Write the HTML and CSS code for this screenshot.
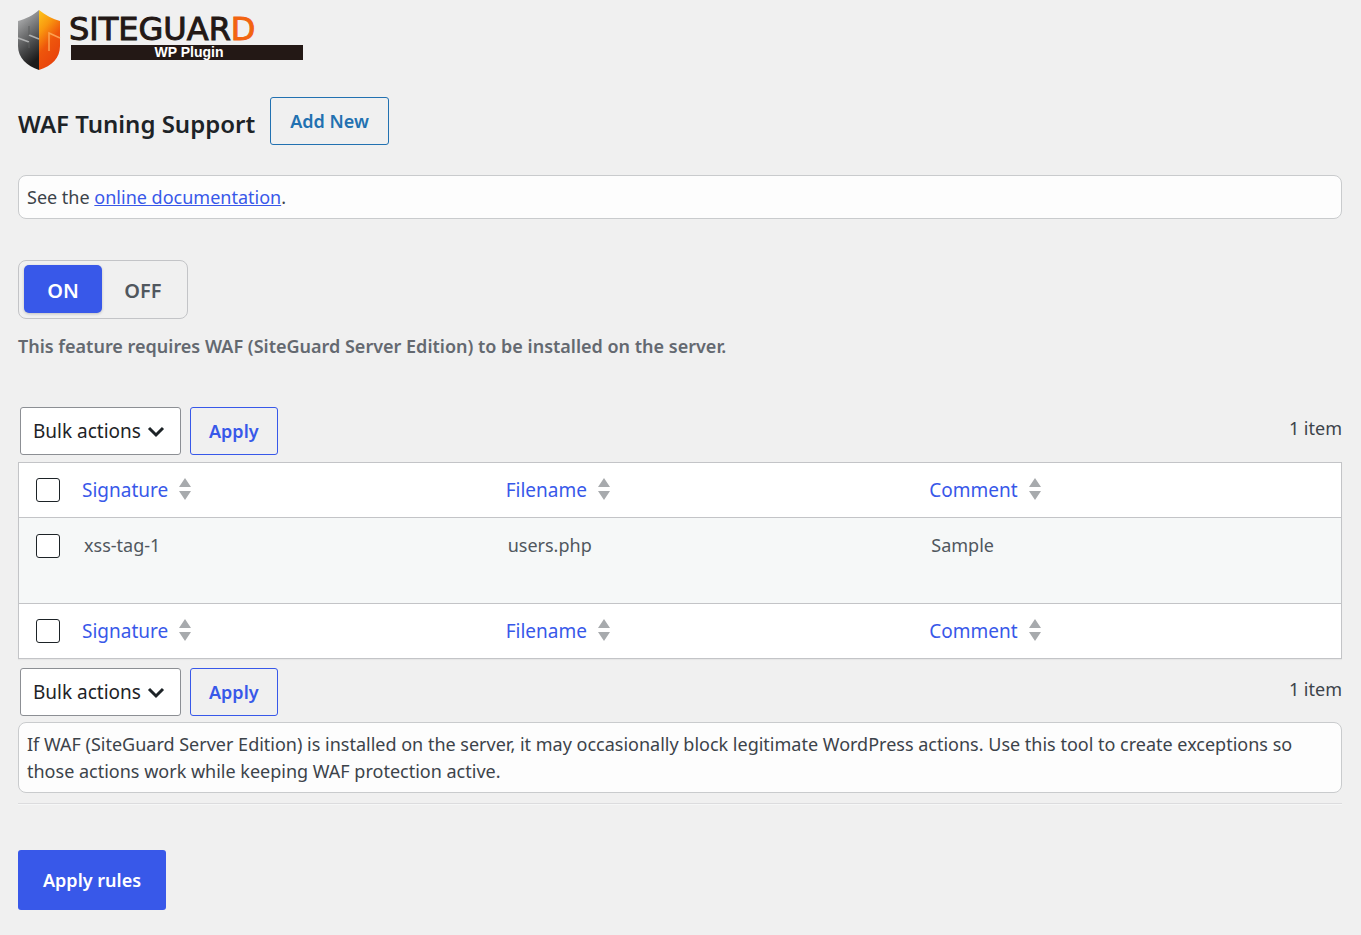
FILE: index.html
```html
<!DOCTYPE html>
<html lang="en">
<head>
    <meta charset="utf-8">
    <title>WAF Tuning Support</title>
    <meta name="viewport" content="width=device-width, initial-scale=1.0">
    <link rel="stylesheet" href="styles.css">
</head>
<body>
    <svg class="logo" width="286" height="60" viewBox="0 0 286 60" role="img" aria-label="SiteGuard WP Plugin">
        <defs>
            <linearGradient id="steel" x1="0" y1="0" x2="0.3" y2="1">
                <stop offset="0" stop-color="#c4c5c6"/>
                <stop offset="0.35" stop-color="#858687"/>
                <stop offset="0.7" stop-color="#48494a"/>
                <stop offset="1" stop-color="#1c1b1b"/>
            </linearGradient>
            <linearGradient id="fire" x1="0.1" y1="0" x2="0.5" y2="1">
                <stop offset="0" stop-color="#fdc21c"/>
                <stop offset="0.3" stop-color="#f9980f"/>
                <stop offset="0.6" stop-color="#ee560c"/>
                <stop offset="1" stop-color="#e8420c"/>
            </linearGradient>
        </defs>
        <path d="M21 0C16 5 7 9 0 11V36C0 48 9 56 21 60Z" fill="url(#steel)"/>
        <path d="M21 0C27 5 35 9 42 11V36C42 48 34 56 21 60Z" fill="url(#fire)"/>
        <path d="M0 28L11 32M11 25L21 29" fill="none" stroke="#c4c5c6" stroke-width="1.5" opacity="0.8"/>
        <path d="M11 16V25M11 32V38" fill="none" stroke="#5d5e5f" stroke-width="1"/>
        <path d="M31 41V23L42 28" fill="none" stroke="#ffb163" stroke-width="1.5" opacity="0.8"/>
        <text class="logo-name" x="51" y="30">SITEGUAR<tspan class="logo-d">D</tspan></text>
        <rect x="53" y="35" width="232" height="15" fill="#231815"/>
        <text class="logo-sub" x="171" y="47" text-anchor="middle">WP Plugin</text>
    </svg>

    <div class="heading">
        <h1>WAF Tuning Support</h1>
        <button type="button" class="button add-new">Add New</button>
    </div>

    <p class="notice">See the <a href="#">online documentation</a>.</p>

    <form>
        <div class="switch">
            <input type="radio" name="waf" id="waf-on" value="1" checked>
            <label for="waf-on">ON</label>
            <input type="radio" name="waf" id="waf-off" value="0">
            <label for="waf-off">OFF</label>
        </div>
        <p class="description">This feature requires WAF (SiteGuard Server Edition) to be installed on the server.</p>

        <div class="tablenav">
            <div class="select">
                <select aria-label="Select bulk action">
                    <option>Bulk actions</option>
                    <option>Delete</option>
                </select>
                <svg width="18" height="12" viewBox="0 0 18 12"><path d="M2 2L9 9L16 2" fill="none" stroke="#1d2327" stroke-width="3"/></svg>
            </div>
            <button type="button" class="button">Apply</button>
            <span class="count">1 item</span>
        </div>

        <table>
            <thead>
                <tr>
                    <td class="check"><input type="checkbox" aria-label="Select all"></td>
                    <th><a href="#">Signature <svg class="sort" width="12" height="22" viewBox="0 0 12 22"><path d="M6 0L12 9H0ZM0 13H12L6 22Z" fill="#a7aaad"/></svg></a></th>
                    <th><a href="#">Filename <svg class="sort" width="12" height="22" viewBox="0 0 12 22"><path d="M6 0L12 9H0ZM0 13H12L6 22Z" fill="#a7aaad"/></svg></a></th>
                    <th><a href="#">Comment <svg class="sort" width="12" height="22" viewBox="0 0 12 22"><path d="M6 0L12 9H0ZM0 13H12L6 22Z" fill="#a7aaad"/></svg></a></th>
                </tr>
            </thead>
            <tbody>
                <tr>
                    <td class="check"><input type="checkbox" aria-label="Select xss-tag-1"></td>
                    <td>xss-tag-1</td>
                    <td>users.php</td>
                    <td>Sample</td>
                </tr>
            </tbody>
            <tfoot>
                <tr>
                    <td class="check"><input type="checkbox" aria-label="Select all"></td>
                    <th><a href="#">Signature <svg class="sort" width="12" height="22" viewBox="0 0 12 22"><path d="M6 0L12 9H0ZM0 13H12L6 22Z" fill="#a7aaad"/></svg></a></th>
                    <th><a href="#">Filename <svg class="sort" width="12" height="22" viewBox="0 0 12 22"><path d="M6 0L12 9H0ZM0 13H12L6 22Z" fill="#a7aaad"/></svg></a></th>
                    <th><a href="#">Comment <svg class="sort" width="12" height="22" viewBox="0 0 12 22"><path d="M6 0L12 9H0ZM0 13H12L6 22Z" fill="#a7aaad"/></svg></a></th>
                </tr>
            </tfoot>
        </table>

        <div class="tablenav bottom">
            <div class="select">
                <select aria-label="Select bulk action">
                    <option>Bulk actions</option>
                    <option>Delete</option>
                </select>
                <svg width="18" height="12" viewBox="0 0 18 12"><path d="M2 2L9 9L16 2" fill="none" stroke="#1d2327" stroke-width="3"/></svg>
            </div>
            <button type="button" class="button">Apply</button>
            <span class="count">1 item</span>
        </div>

        <p class="notice">If WAF (SiteGuard Server Edition) is installed on the server, it may occasionally block legitimate WordPress actions. Use this tool to create exceptions so those actions work while keeping WAF protection active.</p>
        <hr>
        <button type="submit" class="submit">Apply rules</button>
    </form>
</body>
</html>
```

FILE: styles.css
```css
* {box-sizing: border-box;}
body {margin: 0; padding: 10px 19px 25px 18px; background: #f0f0f0; color: #3c434a; font-family: "Noto Sans", "Open Sans", sans-serif; font-size: 18px; line-height: 27px;}
a {color: #3858e9;}
button, select {font-family: inherit; font-size: 18px; line-height: 27px;}

.logo {display: block; overflow: visible;}
.logo-name {font-family: "DejaVu Sans", sans-serif; font-size: 32px; fill: #231815; stroke: #231815;}
.logo-d {fill: #f26411; stroke: #f26411;}
.logo-sub {font-family: "Liberation Sans", sans-serif; font-size: 14px; font-weight: bold; fill: #fff;}

.heading {display: flex; align-items: center; gap: 15px; margin-top: 27px;}
h1 {margin: 6px 0 0; font-size: 24px; line-height: 32px; font-weight: 600; color: #1d2327;}
.button {height: 48px; padding: 0 18px; border: 1px solid #3858e9; border-radius: 3px; background: transparent; color: #3858e9; font-weight: 600;}
.add-new {padding: 0 19px; border-color: #2271b1; color: #2271b1;}

.notice {margin: 0; padding: 8px 8px 7px; border: 1px solid #c9cbcd; border-radius: 8px; background: #fdfdfd;}
.heading + .notice {margin-top: 30px;}

.switch {display: flex; gap: 2px; width: fit-content; margin-top: 41px; padding: 4px 5px 5px; border: 1px solid #c3c4c7; border-radius: 8px;}
.switch input {position: absolute; opacity: 0;}
.switch label {width: 78px; height: 48px; border-radius: 5px; font-size: 20px; line-height: 51px; font-weight: 600; text-align: center; color: #50575e;}
.switch input:checked + label {background: #3858e9; color: #fff; box-shadow: 0 1px 3px rgba(0, 0, 0, 0.2);}
.description {margin: 14px 0 0; font-weight: 600; color: #646970;}

.tablenav {display: flex; align-items: center; gap: 9px; margin: 47px 0 7px; padding-left: 2px;}
.tablenav.bottom {margin: 9px 0 6px;}
.select {position: relative;}
.select select {display: block; width: 161px; height: 48px; padding: 1px 30px 0 12px; border: 1px solid #8c8f94; border-radius: 3px; background: #fff; color: #1d2327; font-size: 19px; appearance: none;}
.select svg {position: absolute; right: 16px; top: 19px; pointer-events: none;}
.count {margin: 0 0 6px auto;}

table {width: 100%; table-layout: fixed; border: 1px solid #c3c4c7; border-spacing: 0; background: #fff; box-shadow: 0 1px 1px rgba(0, 0, 0, 0.04);}
th {padding: 1px 12px 0; font-weight: 400; font-size: 19px; text-align: left;}
th a {display: flex; align-items: center; gap: 11px; text-decoration: none;}
.sort {margin-bottom: 4px;}
td {padding: 14px 14px 44px; color: #50575e;}
.check {width: 51px; padding: 0 0 0 17px; vertical-align: middle;}
tbody .check {padding-top: 16px; vertical-align: top;}
thead th, thead td {border-bottom: 1px solid #c3c4c7; height: 55px;}
tfoot th, tfoot td {border-top: 1px solid #c3c4c7; height: 55px;}
tbody td {background: #f6f8f8;}
input[type="checkbox"] {display: block; width: 24px; height: 24px; margin: 0; border: 1px solid #1d2327; border-radius: 3px; background: #fff; appearance: none;}

hr {height: 2px; margin: 10px 0 45px; border: 0; border-top: 1px solid #dcdcde; border-bottom: 1px solid #f6f7f7;}
.submit {height: 60px; padding: 0 25px; border: 0; border-radius: 3px; background: #3858e9; color: #fff; font-weight: 600;}
```
